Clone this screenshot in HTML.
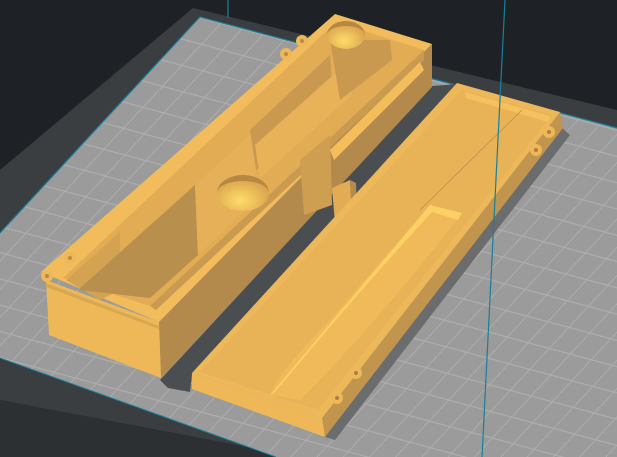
<!DOCTYPE html>
<html><head><style>html,body{margin:0;padding:0;background:#1e2226;overflow:hidden}svg{display:block}</style></head>
<body>
<svg width="617" height="457" viewBox="0 0 617 457" xmlns="http://www.w3.org/2000/svg">
<defs>
<pattern id="g" width="21" height="21" patternUnits="userSpaceOnUse" patternTransform="matrix(1,0.27,-0.93,1,200,17)">
<rect width="21" height="21" fill="#9b9b9b"/>
<path d="M0 0.5H21M0.5 0V21" stroke="#aeaeae" stroke-width="1"/>
</pattern>
<radialGradient id="h" cx="0.45" cy="0.7" r="0.6"><stop offset="0" stop-color="#ffdc6a"/><stop offset="1" stop-color="#d9a34c"/></radialGradient>
</defs>
<rect width="617" height="457" fill="#1e2226"/>
<polygon points="193,8 617,110 617,457 300,457 0,400 0,170" fill="#3a3e41"/>
<polygon points="0,400 300,457 0,457" fill="#2c3033"/>
<polygon points="200,17 617,128 617,457 276,457 0,358 0,233" fill="url(#g)"/>
<polyline points="0,233 200,17 617,128" fill="none" stroke="#1a7f9a" stroke-width="1.2"/>
<polyline points="0,358 276,457" fill="none" stroke="#1a7f9a" stroke-width="1"/>
<line x1="228" y1="0" x2="228" y2="18" stroke="#1a7f9a" stroke-width="1.2"/>
<polygon points="160,380 432,86 458,84 192,374 190,392 168,388" fill="#4b4e51"/>
<polygon points="322,436 562,128 570,135 335,440" fill="#6a6c6e"/>
<!-- BOX -->
<polygon points="159,322 432,44 432,87 161,378" fill="#b38a4b"/>
<polygon points="46,280 159,322 161,378 49,335" fill="#eeb858"/>
<polygon points="46,283 159,326 159,329 46,287" fill="#d9a751"/>
<polygon points="41,272 335,14 432,44 159,322" fill="#f2bb5b"/>
<polygon points="63,278 336,22 424,50 150,306" fill="#e2ac55"/>
<polygon points="66,280 120,232 120,290 100,300" fill="#d4a352"/>
<polygon points="78,290 195,185 198,255 150,298" fill="#b88f4d"/>
<polygon points="195,185 255,130 256,200 198,255" fill="#e5b057"/>
<polygon points="150,306 424,50 424,60 156,310" fill="#c99a4f"/>
<polygon points="250,130 330,55 333,100 256,170" fill="#c8994f"/>
<polygon points="255,145 350,60 352,95 260,178" fill="#e8b258"/>
<polygon points="330,40 390,40 392,60 340,100" fill="#c9994f"/>
<polygon points="300,160 330,135 332,205 304,215" fill="#cf9f51"/>
<polygon points="330,150 420,62 424,70 334,160" fill="#f3bd5c"/>
<!-- holes -->
<ellipse cx="243" cy="193" rx="26" ry="18" fill="url(#h)"/>
<path d="M217,193 A26,18 0 0 1 269,193 A26,12 0 0 0 217,193Z" fill="#b68843"/>
<ellipse cx="346" cy="35" rx="19" ry="14" fill="url(#h)"/>
<path d="M327,35 A19,14 0 0 1 365,35 A19,9 0 0 0 327,35Z" fill="#b68843"/>
<polygon points="332,188 350,180 352,215 335,223" fill="#e2ac55"/>
<polygon points="350,180 356,183 357,212 352,215" fill="#b68a4a"/>
<circle cx="47" cy="276" r="6" fill="#eeb858"/><circle cx="47" cy="276" r="2" fill="#b68a4a"/>
<circle cx="70" cy="258" r="6" fill="#eeb858"/><circle cx="70" cy="258" r="2" fill="#b68a4a"/>
<circle cx="286" cy="54" r="6" fill="#eeb858"/><circle cx="286" cy="54" r="2" fill="#b68a4a"/>
<circle cx="302" cy="41" r="6" fill="#eeb858"/><circle cx="302" cy="41" r="2" fill="#b68a4a"/>
<!-- LID -->
<polygon points="560,112 563,128 325,437 322,418" fill="#c2954e"/>
<polygon points="192,373 322,418 325,437 192,389" fill="#eeb858"/>
<polygon points="457,83 560,112 322,418 192,373" fill="#edb85a"/>
<polygon points="462,90 552,115 318,410 200,372" fill="#e8b257"/>
<polygon points="465,92 550,116 548,122 466,98" fill="#f5c05e"/>
<path d="M430,205 L462,213 Q380,320 300,400 L270,395 Q280,370 330,320Z" fill="#f0ba5b"/>
<path d="M430,205 L462,213 L458,220 L432,212 Q360,290 275,392 L270,395 Q350,300 430,205Z" fill="#fbd163"/>
<line x1="522" y1="110" x2="420" y2="210" stroke="#b88c49" stroke-width="0.7"/>
<circle cx="549" cy="132" r="6" fill="#eeb858"/><circle cx="549" cy="132" r="2" fill="#a9804a"/>
<circle cx="536" cy="150" r="6" fill="#eeb858"/><circle cx="536" cy="150" r="2" fill="#a9804a"/>
<circle cx="356" cy="373" r="6" fill="#eeb858"/><circle cx="356" cy="373" r="2" fill="#a9804a"/>
<circle cx="337" cy="398" r="6" fill="#eeb858"/><circle cx="337" cy="398" r="2" fill="#a9804a"/>
<line x1="505" y1="0" x2="482" y2="457" stroke="#1a7f9a" stroke-width="1.2"/>
</svg>
</body></html>
